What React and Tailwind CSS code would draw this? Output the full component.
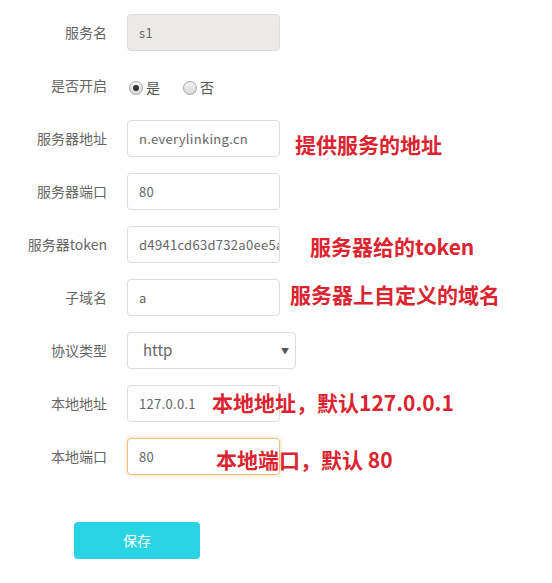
import React from "react";

const font = { fontFamily: '"Noto Sans CJK SC", "Microsoft YaHei", sans-serif' };

function Row({ label, children, note, noteClass }) {
  return (
    <div className="relative flex items-center h-[37px]">
      <div className="w-[108px] pr-[1px] text-right text-[14px] text-[#666]">{label}</div>
      <div className="ml-[19px] flex items-center">{children}</div>
      {note && (
        <div className={"absolute top-1/2 -translate-y-1/2 whitespace-nowrap text-[21px] font-bold text-[#da2430] " + noteClass}>
          {note}
        </div>
      )}
    </div>
  );
}

function Input({ value, disabled, focused }) {
  return (
    <div
      className={
        "w-[153px] h-[37px] rounded-[4px] border px-[11px] flex items-center text-[13px] text-[#666] overflow-hidden whitespace-nowrap tracking-[0.3px] " +
        (disabled
          ? "bg-[#ebeae6] border-[#dcdcd8]"
          : focused
          ? "bg-white border-[#f0c27e] shadow-[0_0_4px_rgba(240,180,100,0.6)]"
          : "bg-white border-[#dcdcdc]")
      }
    >
      {value}
    </div>
  );
}

function Radio({ checked, label }) {
  return (
    <div className="flex items-center gap-[3px] text-[14px] text-[#555]">
      <span className="w-[14px] h-[14px] rounded-full border border-[#a8a8a8] bg-gradient-to-b from-[#f4f4f4] to-[#d8d8d8] flex items-center justify-center">
        {checked && <span className="w-[6px] h-[6px] rounded-full bg-[#333]" />}
      </span>
      <span>{label}</span>
    </div>
  );
}

export default function App() {
  return (
    <div className="w-[552px] h-[583px] bg-white pt-[14px]" style={font}>
      <div className="flex flex-col gap-[16px]">
        <Row label="服务名">
          <Input value="s1" disabled />
        </Row>
        <Row label="是否开启">
          <div className="flex items-center gap-[23px] ml-[2px] mt-[4px]">
            <Radio checked label="是" />
            <Radio label="否" />
          </div>
        </Row>
        <Row label="服务器地址" note="提供服务的地址" noteClass="left-[295px] mt-[6px]">
          <Input value="n.everylinking.cn" />
        </Row>
        <Row label="服务器端口">
          <Input value="80" />
        </Row>
        <Row label="服务器token" note="服务器给的token" noteClass="left-[310px] mt-[2px]">
          <Input value="d4941cd63d732a0ee5a" />
        </Row>
        <Row label="子域名" note="服务器上自定义的域名" noteClass="left-[290px] -mt-[3px]">
          <Input value="a" />
        </Row>
        <Row label="协议类型">
          <div className="relative w-[169px] h-[37px] rounded-[4px] border border-[#dcdcdc] bg-white flex items-center pl-[15px] text-[15px] text-[#666]">
            http
            <span className="absolute right-[6px] top-1/2 -translate-y-1/2 text-[8px] text-[#555]">▼</span>
          </div>
        </Row>
        <Row label="本地地址" note="本地地址，默认127.0.0.1" noteClass="left-[212px] -mt-[1px]">
          <Input value="127.0.0.1" />
        </Row>
        <Row label="本地端口" note="本地端口，默认 80" noteClass="left-[216px] mt-[3px]">
          <Input value="80" focused />
        </Row>
      </div>
      <div className="mt-[47px] ml-[74px]">
        <button className="w-[126px] h-[37px] rounded-[4px] bg-[#2ad3e3] text-white text-[14px]">保存</button>
      </div>
    </div>
  );
}
